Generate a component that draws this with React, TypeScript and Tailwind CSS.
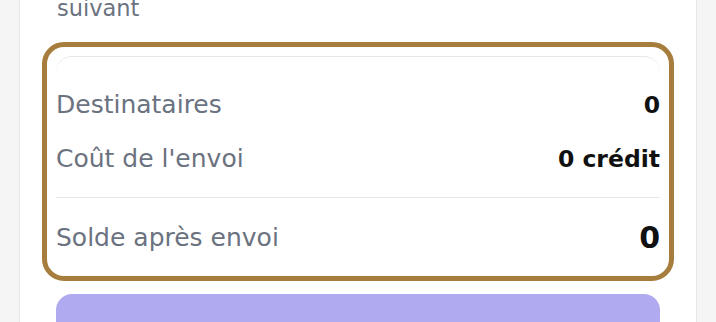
const rows = [
  { label: 'Destinataires', value: '0' },
  { label: "Coût de l'envoi", value: '0 crédit' },
];

export default function App() {
  return (
    <div className="h-[322px] overflow-hidden bg-[#f5f5f5] px-[19px] font-['DejaVu_Sans',sans-serif]">
      <div className="h-[360px] border-x border-[#e5e7eb] bg-white px-[22px]">
        {/* end of the paragraph above */}
        <p className="-mt-[7px] pl-[15px] text-[22.5px] leading-[30px] text-[#6b7280]">suivant</p>

        {/* summary */}
        <div className="mt-[19px] rounded-[22px] border-[5px] border-[#a67d3c] p-[9px]">
          <div className="rounded-2xl border-t border-[#e5e7eb] pt-[32px] pb-[11px]">
            {rows.map((r) => (
              <div key={r.label} className="mb-[22px] flex items-center justify-between leading-[32px]">
                <span className="text-[25px] text-[#6b7280]">{r.label}</span>
                <span className="text-[23.5px] font-bold text-[#111111]">{r.value}</span>
              </div>
            ))}
            <div className="mt-px mb-[22px] h-px bg-[#e5e7eb]" />
            <div className="flex items-center justify-between leading-[36px]">
              <span className="text-[25px] text-[#6b7280]">Solde après envoi</span>
              <span className="text-[30px] font-bold text-[#111111]">0</span>
            </div>
          </div>
        </div>

        <button className="mx-[14px] mt-[13px] block h-[56px] w-[604px] rounded-2xl bg-[#b0aaf0]" />
      </div>
    </div>
  );
}
